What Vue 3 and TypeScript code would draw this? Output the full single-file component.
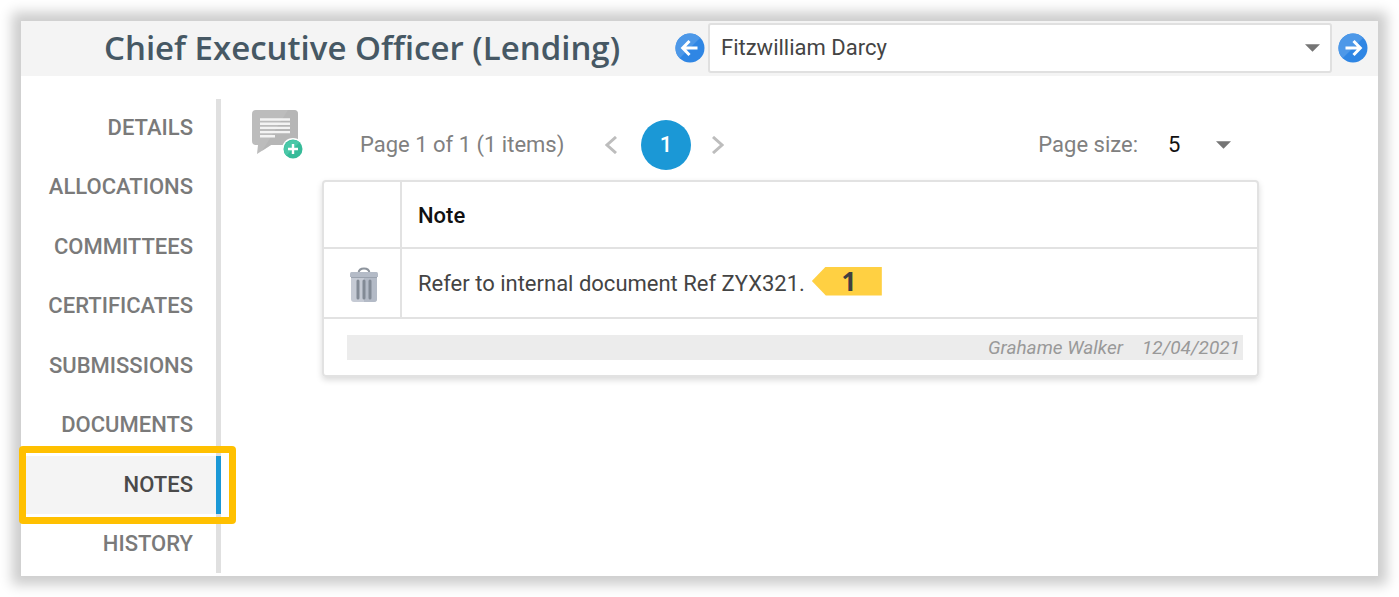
<script setup lang="ts">
import { ref } from 'vue'

const sections = ['Details', 'Allocations', 'Committees', 'Certificates', 'Submissions', 'Documents', 'Notes', 'History']
const active = ref('Notes')
const person = ref('Fitzwilliam Darcy')
const people = ['Fitzwilliam Darcy']
const pageSize = ref(5)
const notes = [{ text: 'Refer to internal document Ref ZYX321.', author: 'Grahame Walker', date: '12/04/2021' }]
</script>

<template>
  <div class="shell">
    <header class="top">
      <h1>Chief Executive Officer (Lending)</h1>
      <button class="round" type="button" aria-label="Previous person">
        <svg viewBox="0 0 30 30"><circle cx="15" cy="15" r="14.5" fill="#2f86e4" /><path d="M4.7 25.3A14.5 14.5 0 0 1 25.3 4.7Z" fill="#4d98e8" /><path d="M22.5 15H8.5M14.5 8L7.7 15L14.5 22" fill="none" stroke="#fff" stroke-width="3" /></svg>
      </button>
      <div class="picker person">
        <select v-model="person" aria-label="Person">
          <option v-for="p in people" :key="p">{{ p }}</option>
        </select>
        <svg class="caret" viewBox="0 0 16 8"><path d="M0 0H16L8 8Z" fill="#757575" /></svg>
      </div>
      <button class="round" type="button" aria-label="Next person">
        <svg viewBox="0 0 30 30"><circle cx="15" cy="15" r="14.5" fill="#2f86e4" /><path d="M4.7 25.3A14.5 14.5 0 0 1 25.3 4.7Z" fill="#4d98e8" /><path d="M7.5 15H21.5M15.5 8L22.3 15L15.5 22" fill="none" stroke="#fff" stroke-width="3" /></svg>
      </button>
    </header>

    <div class="body">
      <nav class="side">
        <a v-for="s in sections" :key="s" href="#" :class="{ active: s === active }" @click.prevent="active = s">{{ s }}</a>
      </nav>

      <main>
        <button class="add" type="button" aria-label="Add note">
          <svg viewBox="0 0 51 50">
            <path d="M4 0H42Q46 0 46 4V31Q46 35 42 35H19L5 44L6 35H4Q0 35 0 31V4Q0 0 4 0Z" fill="#bcbcbc" />
            <path d="M36 0H42Q46 0 46 4V31Q46 35 42 35H19L10 41Z" fill="#b2b2b2" opacity=".6" />
            <path d="M8 9.5H38M8 13.7H38M8 17.9H38M8 22.1H38M8 26.3H23" stroke="#f3f3f3" stroke-width="2.4" />
            <circle cx="41" cy="39" r="11" fill="#fff" />
            <circle cx="41" cy="39" r="9.5" fill="#36bb99" />
            <path d="M34.3 45.7A9.5 9.5 0 0 1 47.7 32.3Z" fill="#4ac8a8" />
            <path d="M41 34V44M36 39H46" stroke="#fff" stroke-width="2.4" />
          </svg>
        </button>

        <section class="list">
          <div class="pager">
            <span class="summary">Page 1 of 1 (1 items)</span>
            <button class="step" type="button" aria-label="Previous page">
              <svg viewBox="0 0 12 18"><path d="M11 1L2 9L11 17" fill="none" stroke="#bdbdbd" stroke-width="3" /></svg>
            </button>
            <button class="page" type="button">1</button>
            <button class="step" type="button" aria-label="Next page">
              <svg viewBox="0 0 12 18"><path d="M1 1L10 9L1 17" fill="none" stroke="#bdbdbd" stroke-width="3" /></svg>
            </button>
            <label class="size-label" for="page-size">Page size:</label>
            <div class="picker size">
              <select id="page-size" v-model="pageSize">
                <option :value="5">5</option>
                <option :value="10">10</option>
              </select>
              <svg class="caret" viewBox="0 0 16 8"><path d="M0 0H16L8 8Z" fill="#757575" /></svg>
            </div>
          </div>

          <table>
            <thead>
              <tr><th class="tool"></th><th scope="col">Note</th></tr>
            </thead>
            <tbody v-for="n in notes" :key="n.text">
              <tr>
                <td class="tool">
                  <button class="trash" type="button" aria-label="Delete note">
                    <svg viewBox="0 0 30 36">
                      <path d="M9.500 6Q10 1.500 15 1.500T20.500 6" fill="none" stroke="#8d949d" stroke-width="2" />
                      <path d="M2 10H28V32Q28 35 25 35H5Q2 35 2 32Z" fill="#c5cad4" />
                      <path d="M15 10H28V32Q28 35 25 35H15Z" fill="#b3bac6" />
                      <path d="M2.500 5H27.500Q29 5 29 7V10H1V7Q1 5 2.500 5Z" fill="#b4bbc7" />
                      <path d="M2 10.500H28" stroke="#9aa2ae" />
                      <path d="M9 14V31M15 14V31M21 14V31" stroke="#828a95" stroke-width="3" stroke-linecap="round" />
                    </svg>
                  </button>
                </td>
                <td>
                  <div class="text"><span>{{ n.text }}</span><span class="tag">1</span></div>
                </td>
              </tr>
              <tr>
                <td class="meta" colspan="2">
                  <div class="strip"><span>{{ n.author }}</span><span>{{ n.date }}</span></div>
                </td>
              </tr>
            </tbody>
          </table>
        </section>
      </main>
    </div>
  </div>
</template>

<style>
body {
  background: #fff;
}
</style>

<style scoped>
.shell,
.shell * {
  box-sizing: border-box;
}
.shell {
  display: flex;
  flex-direction: column;
  min-height: calc(100vh - 42px);
  margin: 21px;
  background: #fff;
  box-shadow: 0 0 12px 9px rgba(0, 0, 0, 0.2);
  font-family: Roboto, 'Liberation Sans', sans-serif;
  font-size: 22px;
  line-height: 26px;
  color: #444;
}
button {
  display: block;
  padding: 0;
  border: 0;
  background: none;
  font: inherit;
  cursor: pointer;
}
svg {
  display: block;
  width: 100%;
  height: 100%;
}
.top {
  display: flex;
  align-items: center;
  padding: 2px 10px 3px 83px;
  background: #f4f4f4;
}
h1 {
  width: 571px;
  margin: 0;
  font: 600 33px/44px 'Open Sans', 'Noto Sans', sans-serif;
  color: #465864;
  white-space: nowrap;
}
.round {
  flex: none;
  width: 30px;
  height: 30px;
}
.picker {
  position: relative;
}
.picker select {
  width: 100%;
  appearance: none;
  border: 0;
  background: none;
  font: inherit;
  color: inherit;
}
.caret {
  position: absolute;
  top: 50%;
  right: 12px;
  width: 15px;
  height: 8px;
  margin-top: -4px;
  pointer-events: none;
}
.person {
  flex: 1;
  margin: 0 6px 0 3px;
}
.person select {
  height: 50px;
  padding: 0 40px 0 11px;
  border: 2px solid #e0e0e0;
  border-radius: 3px;
  background: #fff;
}
.body {
  flex: 1;
  display: flex;
}
.side {
  flex: none;
  display: flex;
  flex-direction: column;
  justify-content: space-between;
  width: 200px;
  margin: 23px 0 3px;
  box-shadow: inset -5px 0 #e0e0e0;
}
.side a {
  position: relative;
  height: 58px;
  padding-right: 28px;
  line-height: 58px;
  font-weight: 500;
  text-align: right;
  text-transform: uppercase;
  text-decoration: none;
  color: #7a7a7a;
}
.side a.active {
  border-right: 5px solid #1b98d6;
  padding-right: 23px;
  background: #f4f4f4;
  color: #4a4a4a;
}
.side a.active::after {
  content: '';
  position: absolute;
  inset: -10px -20px -10px -2px;
  border: 7px solid #ffc000;
  border-radius: 4px;
}
main {
  flex: 1;
  display: flex;
  gap: 19px;
  padding: 34px 119px 20px 31px;
}
.add {
  flex: none;
  width: 51px;
  height: 50px;
}
.list {
  flex: 1;
}
.pager {
  display: flex;
  align-items: center;
  height: 50px;
  margin: 10px 0;
  padding-left: 38px;
  color: #808080;
}
.summary {
  width: 245px;
}
.step {
  width: 12px;
  height: 18px;
}
.page {
  width: 50px;
  height: 50px;
  margin: 0 21px 0 24px;
  border-radius: 50%;
  background: #1b98d6;
  color: #fff;
  font-weight: 500;
}
.size-label {
  margin-left: auto;
}
.size {
  width: 75px;
  margin: 0 16px 0 30px;
  color: #111;
}
.size select {
  height: 40px;
  padding: 0;
}
table {
  width: 100%;
  border: 2px solid #e2e2e2;
  border-radius: 4px;
  border-spacing: 0;
  box-shadow: 0 3px 6px rgba(0, 0, 0, 0.15);
}
th,
td {
  height: 70px;
  padding: 2px 16px 0;
  border-bottom: 2px solid #e2e2e2;
  text-align: left;
}
th {
  height: 67px;
  font-weight: 500;
  color: #111;
}
.tool {
  width: 78px;
  padding: 2px 0 0;
  border-right: 2px solid #e2e2e2;
}
.trash {
  width: 30px;
  height: 36px;
  margin: 2px 0 0 25px;
}
.text {
  display: flex;
  align-items: center;
  gap: 7px;
}
.tag {
  width: 70px;
  height: 29px;
  margin-bottom: 6px;
  padding-left: 4px;
  background: #ffd042;
  clip-path: polygon(0 50%, 14px 0, 100% 0, 100% 100%, 14px 100%);
  font: 700 26px/29px 'Noto Sans', 'Open Sans', sans-serif;
  text-align: center;
  color: #404040;
}
.meta {
  height: 56px;
  padding: 0 14px 0 23px;
  border-bottom: 0;
}
.strip {
  display: flex;
  justify-content: flex-end;
  gap: 19px;
  padding-right: 3px;
  background: #ececec;
  font-size: 19px;
  line-height: 25px;
  font-style: italic;
  color: #999;
}
</style>
